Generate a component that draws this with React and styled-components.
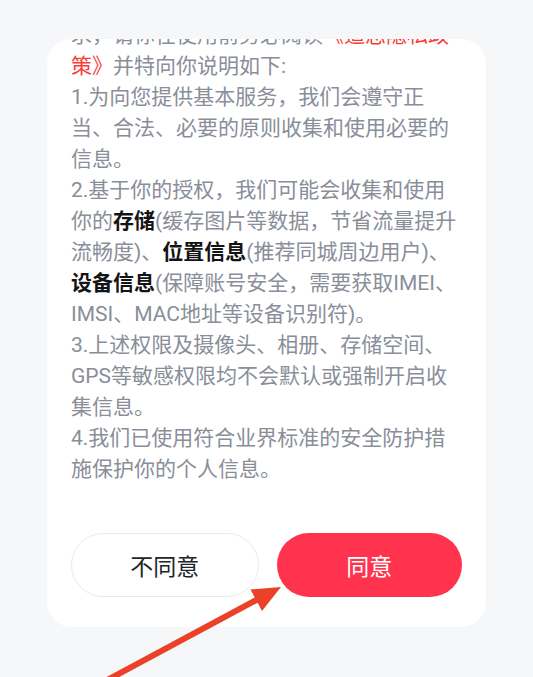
import React from "react";
import styled, { createGlobalStyle } from "styled-components";

const Global = createGlobalStyle`
  html, body {
    margin: 0;
    padding: 0;
    background: #f6f7f9;
  }
  body {
    font-family: Roboto, "Noto Sans CJK SC", sans-serif;
  }
  #root {
    min-height: 677px;
  }
`;

const Page = styled.div`
  position: relative;
  width: 533px;
  height: 677px;
  overflow: hidden;
  padding-top: 39px;
  padding-left: 47px;
  box-sizing: border-box;
`;

const Card = styled.div`
  width: 439px;
  height: 588px;
  background: #ffffff;
  border-radius: 25px;
  overflow: hidden;
  display: flex;
  flex-direction: column;
`;

const Scroll = styled.div`
  flex: 1;
  min-height: 0;
  overflow: hidden;
  padding: 0 24px;
`;

const Content = styled.div`
  margin-top: -19px;
  font-size: 21px;
  line-height: 31px;
  color: #898e99;
`;

const Para = styled.p`
  margin: 0;
`;

const Link = styled.span`
  color: #f73c3a;
`;

const Strong = styled.b`
  color: #141414;
  font-weight: 700;
`;

const Actions = styled.div`
  display: flex;
  gap: 18px;
  padding: 0 24px 30px;
`;

const Button = styled.button`
  flex: 1;
  height: 64px;
  border-radius: 32px;
  font-family: Roboto, "Noto Sans CJK SC", sans-serif;
  font-size: 23px;
  cursor: pointer;
  box-sizing: border-box;
  border: ${(p) => (p.$primary ? "none" : "1.5px solid #e9e9ed")};
  background: ${(p) => (p.$primary ? "#ff334e" : "#ffffff")};
  color: ${(p) => (p.$primary ? "#ffffff" : "#222428")};
`;

const Arrow = styled.svg`
  position: absolute;
  left: 0;
  top: 0;
  pointer-events: none;
`;

export default function App() {
  return (
    <>
      <Global />
      <Page>
        <Card>
          <Scroll>
            <Content>
              <Para>
                求，请你在使用前务必阅读<Link>《追恋隐私政策》</Link>并特向你说明如下:
              </Para>
              <Para>1.为向您提供基本服务，我们会遵守正当、合法、必要的原则收集和使用必要的信息。</Para>
              <Para>
                2.基于你的授权，我们可能会收集和使用你的<Strong>存储</Strong>(缓存图片等数据，节省流量提升流畅度)、
                <Strong>位置信息</Strong>(推荐同城周边用户)、<Strong>设备信息</Strong>(保障账号安全，需要获取IMEI、IMSI、MAC地址等设备识别符)。
              </Para>
              <Para>3.上述权限及摄像头、相册、存储空间、GPS等敏感权限均不会默认或强制开启收集信息。</Para>
              <Para>4.我们已使用符合业界标准的安全防护措施保护你的个人信息。</Para>
            </Content>
          </Scroll>
          <Actions>
            <Button>不同意</Button>
            <Button $primary>同意</Button>
          </Actions>
        </Card>
        <Arrow width="533" height="677" viewBox="0 0 533 677">
          <line x1="98" y1="685" x2="260" y2="598" stroke="#ea4128" strokeWidth="6" />
          <polygon points="281,587 250.5,589.5 262,611" fill="#ea4128" />
        </Arrow>
      </Page>
    </>
  );
}
